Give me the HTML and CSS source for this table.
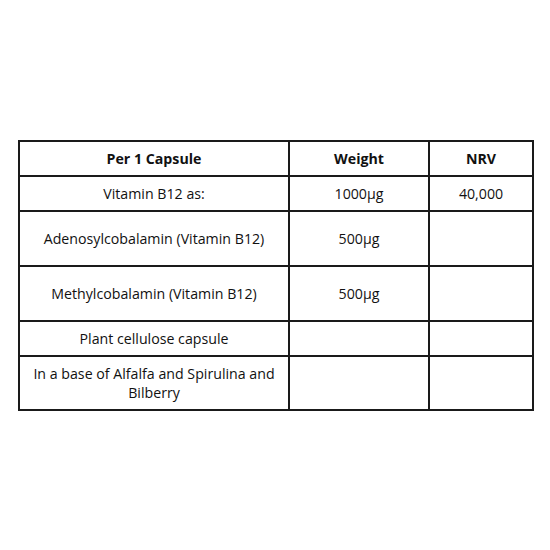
FILE: index.html
```html
<!DOCTYPE html>
<html>
<head>
<meta charset="utf-8">
<link rel="stylesheet" href="styles.css">
</head>
<body>
<div class="page">
<table class="facts">
  <colgroup><col class="c1"><col class="c2"><col class="c3"></colgroup>
  <thead>
    <tr class="h35"><th>Per 1 Capsule</th><th>Weight</th><th>NRV</th></tr>
  </thead>
  <tbody>
    <tr class="h35"><td>Vitamin B12 as:</td><td>1000µg</td><td>40,000</td></tr>
    <tr class="h55"><td>Adenosylcobalamin (Vitamin B12)</td><td>500µg</td><td></td></tr>
    <tr class="h55"><td>Methylcobalamin (Vitamin B12)</td><td>500µg</td><td></td></tr>
    <tr class="h35"><td>Plant cellulose capsule</td><td></td><td></td></tr>
    <tr class="h54"><td>In a base of Alfalfa and Spirulina and Bilberry</td><td></td><td></td></tr>
  </tbody>
</table>
</div>
</body>
</html>
```
FILE: styles.css
```css
html, body {
  margin: 0;
  padding: 0;
  background: #fff;
}
.page {
  width: 550px;
  height: 550px;
  padding: 140px 0 0 18px;
  box-sizing: border-box;
}
.facts {
  border-collapse: collapse;
  table-layout: fixed;
  width: 514px;
  font-family: "Open Sans", "Noto Sans", sans-serif;
  font-size: 14.2px;
  color: #111;
}
.c1 { width: 270px; }
.c2 { width: 140px; }
.c3 { width: 104px; }
.facts th, .facts td {
  border: 2px solid #1a1a1a;
  text-align: center;
  vertical-align: middle;
  padding: 0 12px;
  line-height: 19px;
}
.facts th { font-weight: 700; }
.h35 { height: 35px; }
.h55 { height: 55px; }
.h54 { height: 54px; }
```
